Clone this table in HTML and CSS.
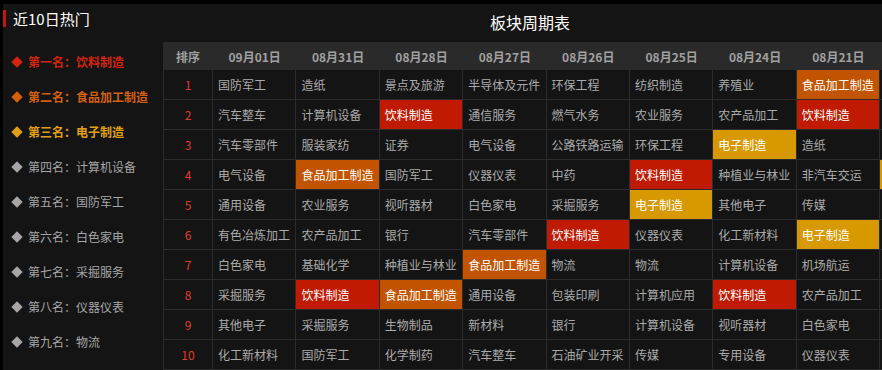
FILE: index.html
```html
<!DOCTYPE html>
<html lang="zh-CN">
<head>
<meta charset="utf-8">
<title>板块周期表</title>
<link rel="stylesheet" href="styles.css">
</head>
<body>
<div class="page">
  <aside class="side">
    <div class="side-title">近10日热门</div>
    <ul class="rank-list">
      <li class="top1">第一名：饮料制造</li>
      <li class="top2">第二名：食品加工制造</li>
      <li class="top3">第三名：电子制造</li>
      <li>第四名：计算机设备</li>
      <li>第五名：国防军工</li>
      <li>第六名：白色家电</li>
      <li>第七名：采掘服务</li>
      <li>第八名：仪器仪表</li>
      <li>第九名：物流</li>
      <li>第十名：化工新材料</li>
    </ul>
  </aside>
  <main class="main">
    <div class="main-title">板块周期表</div>
    <div class="cycle">
      <div class="th">排序</div><div class="th">09月01日</div><div class="th">08月31日</div><div class="th">08月28日</div><div class="th">08月27日</div><div class="th">08月26日</div><div class="th">08月25日</div><div class="th">08月24日</div><div class="th">08月21日</div><div class="th">08月20日</div>

      <div class="td rank">1</div><div class="td">国防军工</div><div class="td">造纸</div><div class="td">景点及旅游</div><div class="td">半导体及元件</div><div class="td">环保工程</div><div class="td">纺织制造</div><div class="td">养殖业</div><div class="td hot-orange">食品加工制造</div><div class="td">国防军工</div>
      <div class="td rank">2</div><div class="td">汽车整车</div><div class="td">计算机设备</div><div class="td hot-red">饮料制造</div><div class="td">通信服务</div><div class="td">燃气水务</div><div class="td">农业服务</div><div class="td">农产品加工</div><div class="td hot-red">饮料制造</div><div class="td">银行</div>
      <div class="td rank">3</div><div class="td">汽车零部件</div><div class="td">服装家纺</div><div class="td">证券</div><div class="td">电气设备</div><div class="td">公路铁路运输</div><div class="td">环保工程</div><div class="td hot-gold">电子制造</div><div class="td">造纸</div><div class="td">证券</div>
      <div class="td rank">4</div><div class="td">电气设备</div><div class="td hot-orange">食品加工制造</div><div class="td">国防军工</div><div class="td">仪器仪表</div><div class="td">中药</div><div class="td hot-red">饮料制造</div><div class="td">种植业与林业</div><div class="td">非汽车交运</div><div class="td hot-gold">电子制造</div>
      <div class="td rank">5</div><div class="td">通用设备</div><div class="td">农业服务</div><div class="td">视听器材</div><div class="td">白色家电</div><div class="td">采掘服务</div><div class="td hot-gold">电子制造</div><div class="td">其他电子</div><div class="td">传媒</div><div class="td">传媒</div>
      <div class="td rank">6</div><div class="td">有色冶炼加工</div><div class="td">农产品加工</div><div class="td">银行</div><div class="td">汽车零部件</div><div class="td hot-red">饮料制造</div><div class="td">仪器仪表</div><div class="td">化工新材料</div><div class="td hot-gold">电子制造</div><div class="td">物流</div>
      <div class="td rank">7</div><div class="td">白色家电</div><div class="td">基础化学</div><div class="td">种植业与林业</div><div class="td hot-orange">食品加工制造</div><div class="td">物流</div><div class="td">物流</div><div class="td">计算机设备</div><div class="td">机场航运</div><div class="td">中药</div>
      <div class="td rank">8</div><div class="td">采掘服务</div><div class="td hot-red">饮料制造</div><div class="td hot-orange">食品加工制造</div><div class="td">通用设备</div><div class="td">包装印刷</div><div class="td">计算机应用</div><div class="td hot-red">饮料制造</div><div class="td">农产品加工</div><div class="td">银行</div>
      <div class="td rank">9</div><div class="td">其他电子</div><div class="td">采掘服务</div><div class="td">生物制品</div><div class="td">新材料</div><div class="td">银行</div><div class="td">计算机设备</div><div class="td">视听器材</div><div class="td">白色家电</div><div class="td">造纸</div>
      <div class="td rank">10</div><div class="td">化工新材料</div><div class="td">国防军工</div><div class="td">化学制药</div><div class="td">汽车整车</div><div class="td">石油矿业开采</div><div class="td">传媒</div><div class="td">专用设备</div><div class="td">仪器仪表</div><div class="td">证券</div>
    </div>
  </main>
</div>
</body>
</html>
```
FILE: styles.css
```css
html, body {
  margin: 0;
  padding: 0;
  background: #000;
  font-family: "Noto Sans CJK SC", "Liberation Sans", sans-serif;
}

.page {
  margin: 4px 0 0 3px;
  height: 366px;
  background: #141414;
  display: flex;
  overflow: hidden;
}

.side {
  width: 160px;
  flex: none;
}

.side-title {
  margin-top: 6px;
  height: 17px;
  line-height: 17px;
  border-left: 3px solid #c4160b;
  padding-left: 7px;
  color: #fff;
  font-size: 15px;
}

.rank-list {
  list-style: none;
  margin: 17px 0 0;
  padding: 0;
}

.rank-list li {
  position: relative;
  height: 35px;
  line-height: 35px;
  padding-left: 25px;
  font-size: 12px;
  color: #a6a6a6;
  white-space: nowrap;
}

.rank-list li::before {
  content: "";
  position: absolute;
  left: 10px;
  top: 13.5px;
  width: 8px;
  height: 8px;
  background: currentColor;
  transform: rotate(45deg);
}

.rank-list li.top1 { color: #d2240f; font-weight: bold; }
.rank-list li.top2 { color: #d2600d; font-weight: bold; }
.rank-list li.top3 { color: #e0a012; font-weight: bold; }

.main {
  flex: 1;
  min-width: 0;
  overflow: hidden;
}

.main-title {
  height: 38px;
  line-height: 36px;
  padding-left: 327px;
  color: #fff;
  font-size: 16px;
}

.cycle {
  display: grid;
  grid-template-columns: 50px repeat(9, 83.4px);
  grid-template-rows: 28px repeat(10, 30px);
  width: max-content;
  font-size: 12px;
}

.th {
  display: flex;
  align-items: center;
  justify-content: center;
  background: #2a2a2a;
  color: #a0a0a0;
  font-weight: bold;
  white-space: nowrap;
}

.td {
  box-sizing: border-box;
  display: flex;
  align-items: center;
  padding-left: 5px;
  border-right: 1px solid #2c2c2c;
  border-bottom: 1px solid #2c2c2c;
  color: #ababab;
  white-space: nowrap;
  overflow: hidden;
}

.td.rank {
  justify-content: center;
  padding-left: 0;
  border-left: 1px solid #2c2c2c;
  color: #e23b29;
}

.td.hot-red { background: #c01a03; color: #fff; }
.td.hot-orange { background: #c25400; color: #fff; }
.td.hot-gold { background: #d89800; color: #fff; }
```
